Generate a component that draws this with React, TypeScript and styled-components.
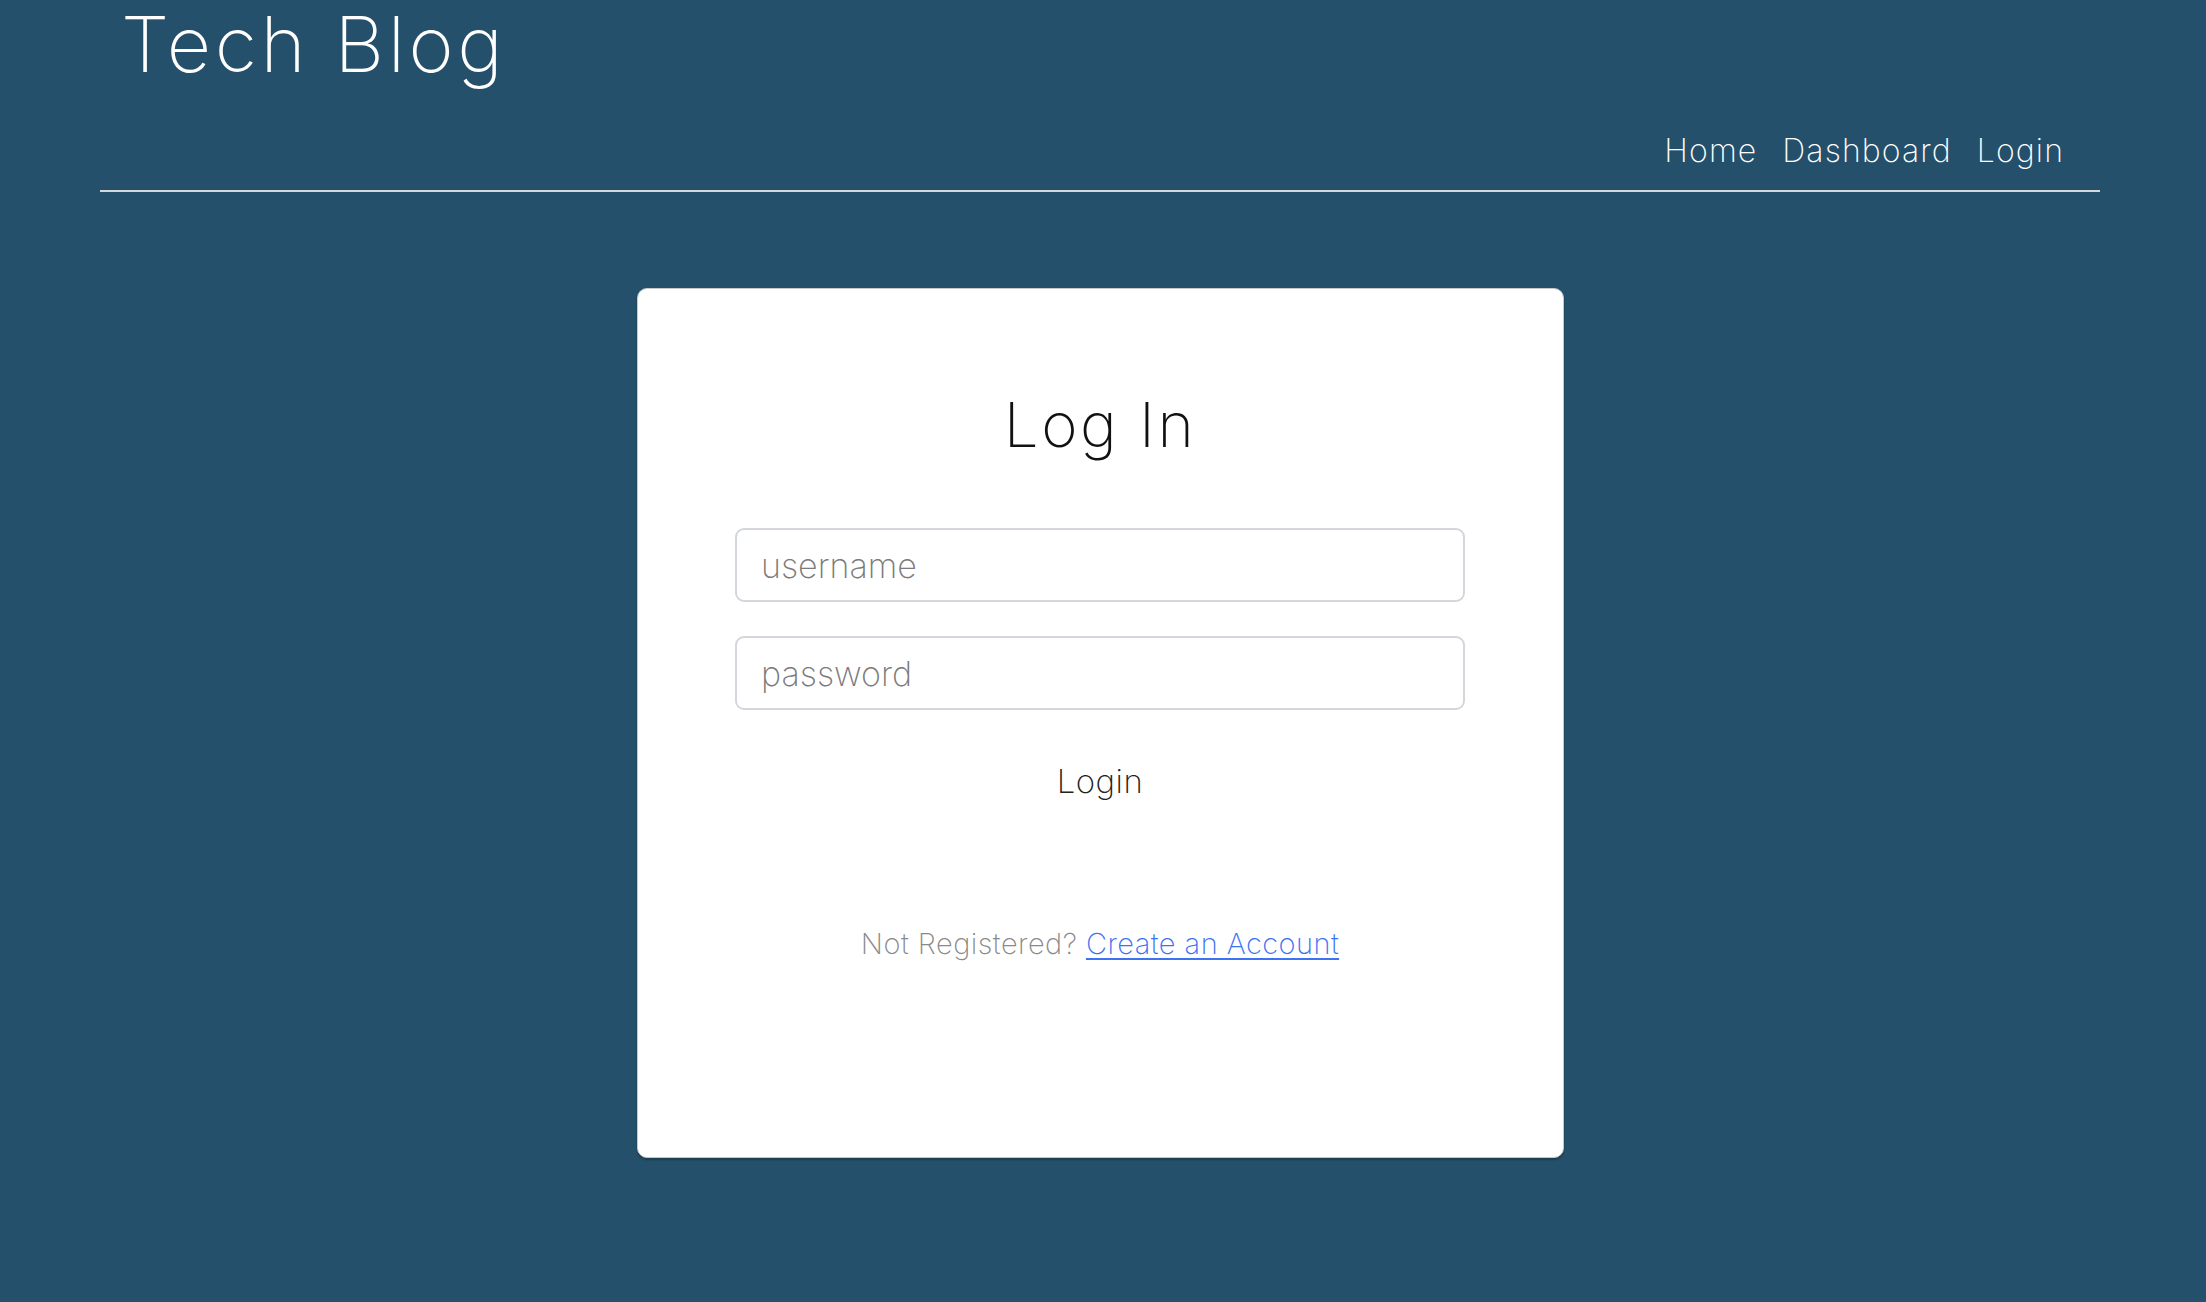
import React from "react";
import styled, { createGlobalStyle } from "styled-components";

const GlobalStyle = createGlobalStyle`
  html, body {
    margin: 0;
    padding: 0;
    background: #24506b;
  }
  body {
    font-family: Inter, "Open Sans", "Liberation Sans", sans-serif;
    font-weight: 200;
    min-height: 1302px;
  }
  * { box-sizing: border-box; }
`;

const Page = styled.div`
  min-height: 1302px;
  background: #24506b;
  display: flex;
  flex-direction: column;
`;

const Header = styled.header`
  width: 2000px;
  margin-left: 100px;
  display: flex;
  flex-direction: column;
  border-bottom: 2px solid #d4d8dc;
  padding-bottom: 23px;
`;

const Title = styled.h1`
  margin: 6px 0 0 0;
  padding-left: 21px;
  font-size: 77px;
  line-height: 1;
  font-weight: 150;
  color: #ffffff;
  letter-spacing: 3.6px;
`;

const Nav = styled.nav`
  margin-top: 52px;
  padding-right: 36px;
  display: flex;
  justify-content: flex-end;
  gap: 25px;
`;

const NavLink = styled.a`
  font-size: 32px;
  line-height: 1;
  font-weight: 200;
  color: #ffffff;
  text-decoration: none;
  letter-spacing: 1.1px;
`;

const Main = styled.main`
  display: flex;
  justify-content: center;
  padding-top: 96px;
  padding-right: 6px;
`;

const Card = styled.section`
  width: 927px;
  height: 870px;
  background: #ffffff;
  border: 1px solid #c8c8c8;
  border-radius: 10px;
  box-shadow: 0 2px 2px rgba(0, 0, 0, 0.25);
  display: flex;
  flex-direction: column;
  align-items: center;
  padding-top: 105px;
`;

const CardTitle = styled.h2`
  margin: 0;
  font-size: 62px;
  line-height: 1;
  font-weight: 150;
  color: #111111;
  letter-spacing: 2.5px;
`;

const Form = styled.form`
  width: 730px;
  margin-top: 72px;
  display: flex;
  flex-direction: column;
  align-items: center;
  gap: 34px;
`;

const Input = styled.input`
  width: 100%;
  height: 74px;
  border: 2px solid #d3d6da;
  border-radius: 9px;
  padding: 0 24px;
  font-family: Inter, "Open Sans", "Liberation Sans", sans-serif;
  font-weight: 200;
  font-size: 34px;
  color: #333;
  outline: none;
  &::placeholder {
    color: #7b7b7b;
  }
`;

const SubmitButton = styled.button`
  margin-top: 21px;
  background: none;
  border: none;
  padding: 0;
  font-family: Inter, "Open Sans", "Liberation Sans", sans-serif;
  font-weight: 200;
  font-size: 33px;
  line-height: 1;
  color: #222222;
  letter-spacing: 0.5px;
  cursor: pointer;
`;

const Footnote = styled.p`
  margin: 131px 0 0 0;
  font-size: 29px;
  line-height: 1;
  font-weight: 200;
  color: #8a8a8a;
  letter-spacing: 0.45px;
`;

const AccountLink = styled.a`
  color: #3d72f2;
  text-decoration: underline;
  text-underline-offset: 4px;
`;

export default function App() {
  return (
    <>
      <GlobalStyle />
      <Page>
        <Header>
          <Title>Tech Blog</Title>
          <Nav>
            <NavLink href="#">Home</NavLink>
            <NavLink href="#">Dashboard</NavLink>
            <NavLink href="#">Login</NavLink>
          </Nav>
        </Header>
        <Main>
          <Card>
            <CardTitle>Log In</CardTitle>
            <Form onSubmit={(e) => e.preventDefault()}>
              <Input type="text" placeholder="username" />
              <Input type="password" placeholder="password" />
              <SubmitButton type="submit">Login</SubmitButton>
            </Form>
            <Footnote>
              Not Registered? <AccountLink href="#">Create an Account</AccountLink>
            </Footnote>
          </Card>
        </Main>
      </Page>
    </>
  );
}
